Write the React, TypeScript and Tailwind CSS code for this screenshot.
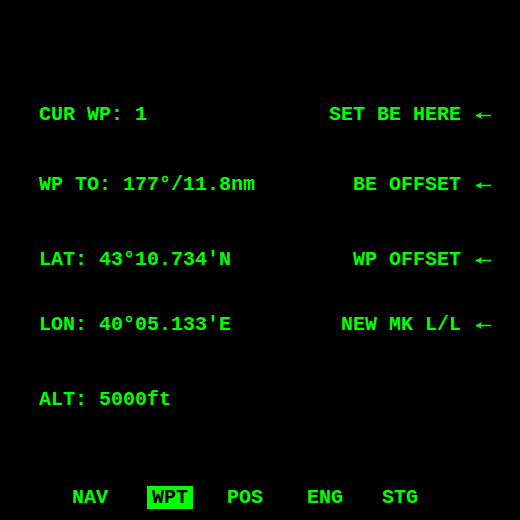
import React from "react";

const Arrow = () => (
  <svg width="16" height="9" viewBox="0 0 16 9" className="ml-[14px] block">
    <path d="M1 4.5 H16" stroke="#00ff00" strokeWidth="1.5" />
    <path d="M0.5 4.5 L7 1 L5.5 4.5 L7 8 Z" fill="#00ff00" />
  </svg>
);

const Row = ({ left, right, mt }: { left: string; right?: string; mt: string }) => (
  <div className={`flex items-center justify-between h-[24px] ${mt}`}>
    <span className="whitespace-pre">{left}</span>
    {right && (
      <span className="flex items-center whitespace-pre">
        {right}
        <Arrow />
      </span>
    )}
  </div>
);

export default function App() {
  return (
    <div
      className="w-[520px] h-[520px] bg-black text-[#00ff00] font-bold text-[20px] flex flex-col pl-[39px] pr-[29px] pt-[103px]"
      style={{ fontFamily: '"Liberation Mono", monospace' }}
    >
      <Row left="CUR WP: 1" right="SET BE HERE" mt="mt-0" />
      <Row left="WP TO: 177°/11.8nm" right="BE OFFSET" mt="mt-[46px]" />
      <Row left="LAT: 43°10.734'N" right="WP OFFSET" mt="mt-[51px]" />
      <Row left="LON: 40°05.133'E" right="NEW MK L/L" mt="mt-[41px]" />
      <Row left="ALT: 5000ft" mt="mt-[51px]" />
      <div className="flex items-center h-[23px] mt-[74px] ml-[28px]">
        <span className="px-[5px]">NAV</span>
        <span className="px-[5px] ml-[34px] bg-[#00ff00] text-black h-[23px] leading-[24px]">WPT</span>
        <span className="px-[5px] ml-[29px]">POS</span>
        <span className="px-[5px] ml-[34px]">ENG</span>
        <span className="px-[5px] ml-[29px]">STG</span>
      </div>
    </div>
  );
}
